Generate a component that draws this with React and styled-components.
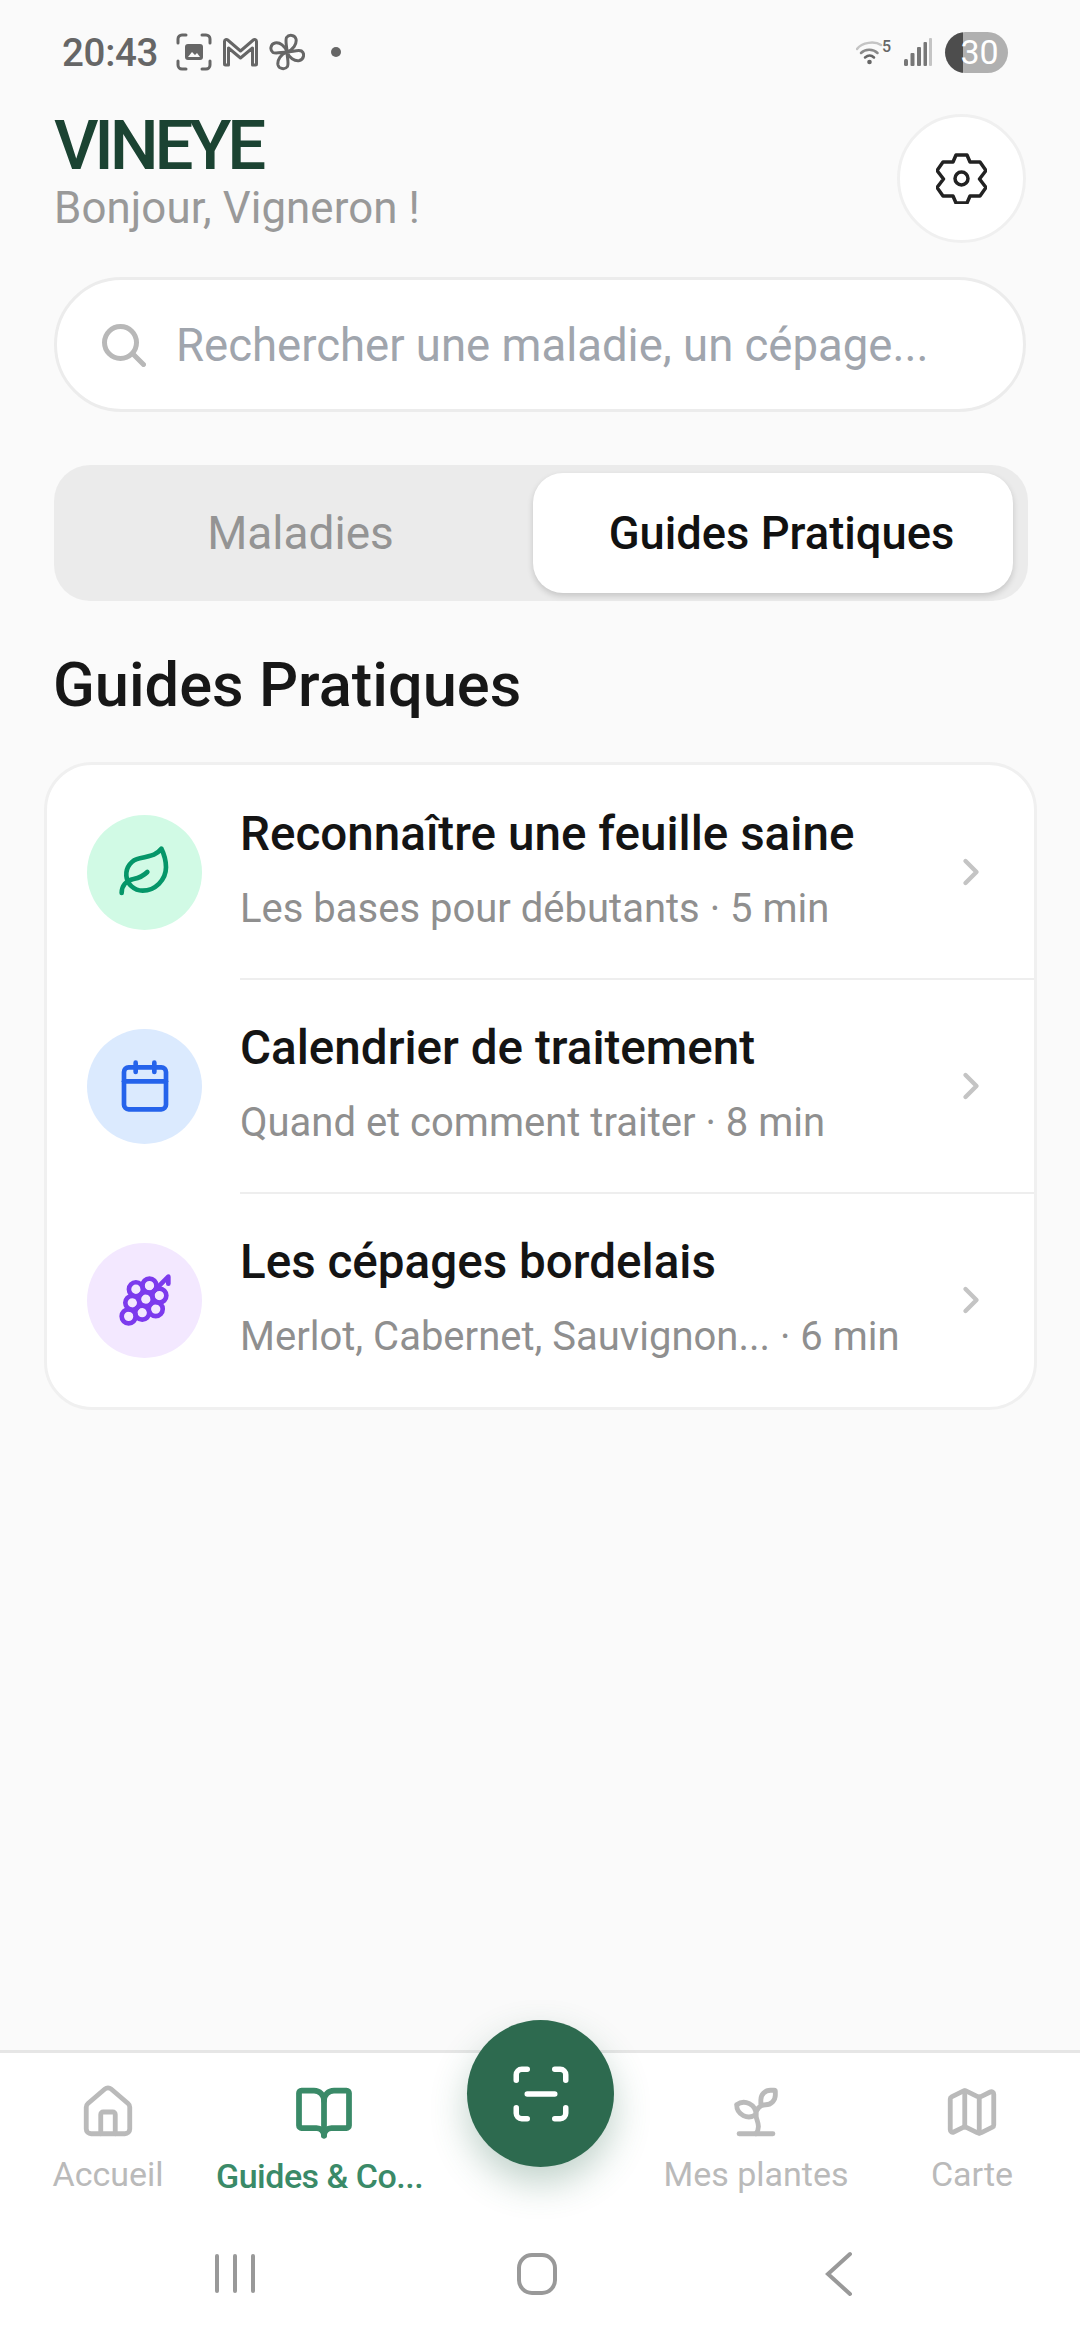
import React from "react";
import styled, { createGlobalStyle } from "styled-components";
import { Leaf, Calendar, Grape, ChevronRight, House, BookOpen, ScanLine, Sprout, Map as MapIcon } from "lucide-react";

const Global = createGlobalStyle`
  html, body { margin: 0; padding: 0; background: #fafafa; }
  * { box-sizing: border-box; }
  body { font-family: Roboto, "Liberation Sans", sans-serif; }
`;

const Page = styled.div`
  width: 1080px; height: 2340px; display: flex; flex-direction: column;
  background: #fafafa; overflow: hidden; position: relative;
`;
const StatusBar = styled.div`
  height: 104px; padding: 0 72px 0 62px; display: flex; align-items: center; justify-content: space-between; color: #666;
`;
const StatusLeft = styled.div`display: flex; align-items: center;`;
const Time = styled.span`font-size: 38.5px; font-weight: 500; letter-spacing: -0.3px; width: 114px;`;
const StatusRight = styled.div`display: flex; align-items: center;`;
const Battery = styled.div`
  width: 63px; height: 41px; border-radius: 21px; margin-left: 13px;
  background: linear-gradient(90deg, #4d4d4d 0 18px, #b0b0b0 18px);
  color: #fff; font-size: 34px; font-weight: 400; display: flex; align-items: center; justify-content: center; padding-left: 6px;
`;
const Main = styled.main`flex: 1; display: flex; flex-direction: column;`;
const Section = styled.section`padding: 0 54px;`;
const Header = styled(Section)`display: flex; justify-content: space-between; align-items: flex-start; padding-top: 10px; padding-bottom: 0;`;
const Brand = styled.div`display: flex; flex-direction: column;`;
const Logo = styled.h1`
  margin: -3px 0 0; font-size: 69px; line-height: 70px; font-weight: 500; color: #1b4332; letter-spacing: -4.2px;
`;
const Greeting = styled.p`margin: 2px 0 0; font-size: 43.8px; line-height: 50px; color: #999; letter-spacing: 0.1px;`;
const GearButton = styled.button`
  width: 129px; height: 129px; border-radius: 50%; background: #fff; border: 3px solid #f0f0f0; display: flex;
  align-items: center; justify-content: center; padding: 0; flex: none;
`;
const SearchBox = styled.div`
  margin-top: 34px; height: 135px; border-radius: 68px; background: #fff; border: 3px solid #ececec;
  display: flex; align-items: center; padding-left: 45px; gap: 30px; color: #a0a5ad;
  font-size: 45.5px; padding-top: 2px;
`;
const Tabs = styled.div`
  margin-top: 53px; height: 136px; width: 974px; border-radius: 36px; background: #ebebeb;
  display: flex; padding: 8px 15px 8px 8px;
`;
const Tab = styled.div`
  flex: ${(p) => (p.$active ? "0 0 480px" : "1")};
  display: flex; align-items: center; justify-content: center; border-radius: 30px;
  font-size: ${(p) => (p.$active ? "45.3px" : "46px")}; font-weight: ${(p) => (p.$active ? 500 : 400)};
  color: ${(p) => (p.$active ? "#111" : "#949494")};
  background: ${(p) => (p.$active ? "#fff" : "transparent")};
  box-shadow: ${(p) => (p.$active ? "0 3px 6px rgba(0,0,0,.16)" : "none")};
  padding-left: ${(p) => (p.$active ? "17px" : "6px")};
`;
const Heading = styled.h2`margin: 44px 0 0 -1px; font-size: 61.4px; line-height: 80px; font-weight: 500; color: #171717;`;
const Card = styled.div`
  margin: 37px 43px 0 44px; background: #fff; border: 3px solid #f0f0f0; border-radius: 48px; overflow: hidden;
`;
const Row = styled.div`
  height: 214px; display: flex; align-items: center; padding-left: 40px;
`;
const Divider = styled.div`height: 2px; margin-left: 193px; background: #eeeeee; margin-top: -1px; margin-bottom: -1px;`;
const IconCircle = styled.div`
  width: 115px; height: 115px; border-radius: 50%; background: ${(p) => p.$bg}; color: ${(p) => p.$fg};
  display: flex; align-items: center; justify-content: center; flex: none;
`;
const RowText = styled.div`margin-left: 38px; flex: 1; display: flex; flex-direction: column; gap: 23px; padding-bottom: 8px;`;
const RowTitle = styled.div`font-size: 47.6px; line-height: 58px; font-weight: 500; color: #141414;`;
const RowSub = styled.div`font-size: 40px; line-height: 46px; color: #8f8f8f;`;
const RowChevron = styled.div`color: #c4c4c4; margin-right: 41px; display: flex;`;
const Nav = styled.nav`
  height: 290px; border-top: 3px solid #e6e6e6; background: #fff; display: flex; flex-direction: column;
`;
const NavTabs = styled.div`display: grid; grid-template-columns: repeat(5, 216px); height: 170px;`;
const NavItem = styled.div`
  display: flex; flex-direction: column; align-items: center; padding-top: 30px; min-width: 0;
  color: ${(p) => (p.$active ? "#3a8a68" : "#bababa")};
`;
const NavLabel = styled.span`
  width: 216px; margin-top: 12px; font-size: 34px; line-height: 42px; text-align: ${(p) => (p.$active ? "left" : "center")}; white-space: nowrap;
  font-weight: ${(p) => (p.$active ? 500 : 400)}; letter-spacing: ${(p) => (p.$active ? "-0.5px" : "0")};
`;
const Fab = styled.button`
  position: absolute; left: 467px; top: 2020px; width: 147px; height: 147px; border-radius: 50%; border: none; padding: 0;
  background: #2d6a4f; color: #fff; display: flex; align-items: center; justify-content: center;
  box-shadow: 0 16px 36px rgba(45, 106, 79, .3);
`;
const SystemNav = styled.div`
  flex: 1; display: grid; grid-template-columns: 1fr 1fr 1fr; align-items: center; justify-items: center; padding: 0 90px 16px 84px;
`;

const ScreenshotIcon = () => (
  <svg width="36" height="38" viewBox="0 0 36 38" fill="none" stroke="#666" strokeWidth="3" strokeLinecap="round">
    <path d="M2 10V6a4 4 0 0 1 4-4h4M26 2h4a4 4 0 0 1 4 4v4M34 28v4a4 4 0 0 1-4 4h-4M10 36H6a4 4 0 0 1-4-4v-4" />
    <rect x="9" y="11" width="18" height="16" rx="3" fill="#666" stroke="none" />
    <path d="M12 24l4-5 3 3 2-2 3 4z" fill="#fafafa" stroke="none" />
  </svg>
);
const GmailIcon = () => (
  <svg width="37" height="30" viewBox="0 0 36 30" fill="none" stroke="#666" strokeWidth="3" strokeLinejoin="round" style={{ marginLeft: 10 }}>
    <path d="M2 27V4.5C2 2.8 4 2 5.2 3L18 14 30.8 3C32 2 34 2.8 34 4.5V27a1 1 0 0 1-1 1h-3V11L18 21 6 11v17H3a1 1 0 0 1-1-1Z" />
  </svg>
);
const FanIcon = () => (
  <svg width="36" height="38" viewBox="0 0 36 38" fill="none" stroke="#666" strokeWidth="3" strokeLinejoin="round" style={{ marginLeft: 10 }}>
    <path d="M18 19C13 19 7 21 4 19.500 .5 17 1.500 11 6 10c5-1 10 3 12 9ZM18 19c0-5-2-11-.5-14.500C20 1 26 2 27 6c1 5-3 11-9 13ZM18 19c5 0 11-2.500 14.500-1 3.500 2.500 2.500 8-2 9.500-5 1-10.500-3-12.500-8.500ZM18 19c0 5 2 11 .5 14.500C16 37 10 36 9 32c-1-5 3-11 9-13Z" />
  </svg>
);
const Dot = styled.span`width: 10px; height: 10px; border-radius: 50%; background: #666; margin-left: 26px;`;

const WifiIcon = () => (
  <svg width="36" height="28" viewBox="0 0 36 28" fill="none">
    <path d="M1 11C6 4 19 3 25 7" stroke="#c4c4c4" strokeWidth="2.500" strokeLinecap="round" />
    <path d="M5 15c4-4 12-4.500 16.500 0" stroke="#8a8a8a" strokeWidth="2.500" strokeLinecap="round" />
    <path d="M9 19.500c3-2.500 6.500-2.500 9 0" stroke="#666" strokeWidth="2.500" strokeLinecap="round" />
    <circle cx="13.500" cy="24" r="2.300" fill="#666" />
    <text x="26" y="14" fontSize="16" fontWeight="500" fill="#666" fontFamily="Roboto">5</text>
  </svg>
);
const SignalIcon = () => (
  <svg width="28" height="30" viewBox="0 0 28 30" style={{ marginLeft: 12 }}>
    <rect x="0" y="22" width="4" height="7" rx="1.500" fill="#777" />
    <rect x="6.500" y="16" width="4" height="13" rx="1" fill="#777" />
    <rect x="13" y="10" width="4" height="19" rx="1" fill="#777" />
    <rect x="19.500" y="5" width="3.500" height="24" rx="1" fill="#777" />
    <rect x="25" y="1" width="3" height="28" rx="1" fill="#c4c4c4" />
  </svg>
);
const GearIcon = () => (
  <svg width="51" height="51" viewBox="0 0 51 51" fill="none" stroke="#222" strokeWidth="3.500" strokeLinejoin="round">
    <path d="M20 2h11l3 7h10l6 8.500-6.500 8.500 6.500 8.500-6 8.500H34l-3 7H20l-3-7H7l-6-8.500L7.500 26 1 17.500 7 9h10z" />
    <circle cx="25.500" cy="25.500" r="6.500" />
  </svg>
);
const SearchIcon = () => (
  <svg width="44" height="43" viewBox="0 0 44 43" fill="none" stroke="#b8b8b8" strokeWidth="5" strokeLinecap="round">
    <circle cx="18.500" cy="18.500" r="16" />
    <path d="M31 30l10.500 10.500" />
  </svg>
);

const HomeSquare = styled.div`width: 40px; height: 42px; border: 4px solid #999; border-radius: 15px;`;
const RecentBars = styled.div`display: flex; gap: 14px;`;
const RecentBar = styled.span`width: 4px; height: 39px; background: #999; border-radius: 2px;`;

const guides = [
  { Icon: Leaf, bg: "#d1fae5", fg: "#059669", title: "Reconnaître une feuille saine", sub: "Les bases pour débutants · 5 min" },
  { Icon: Calendar, bg: "#dbeafe", fg: "#2563eb", title: "Calendrier de traitement", sub: "Quand et comment traiter · 8 min" },
  { Icon: Grape, bg: "#f3e8ff", fg: "#7c3aed", title: "Les cépages bordelais", sub: "Merlot, Cabernet, Sauvignon... · 6 min" },
];

export default function App() {
  return (
    <Page>
      <Global />
      <StatusBar>
        <StatusLeft>
          <Time>20:43</Time>
          <ScreenshotIcon />
          <GmailIcon />
          <FanIcon />
          <Dot />
        </StatusLeft>
        <StatusRight>
          <WifiIcon />
          <SignalIcon />
          <Battery>30</Battery>
        </StatusRight>
      </StatusBar>
      <Main>
        <Header>
          <Brand>
            <Logo>VINEYE</Logo>
            <Greeting>Bonjour, Vigneron !</Greeting>
          </Brand>
          <GearButton><GearIcon /></GearButton>
        </Header>
        <Section>
          <SearchBox><SearchIcon />Rechercher une maladie, un cépage...</SearchBox>
          <Tabs>
            <Tab>Maladies</Tab>
            <Tab $active>Guides Pratiques</Tab>
          </Tabs>
          <Heading>Guides Pratiques</Heading>
        </Section>
        <Card>
          {guides.map(({ Icon, bg, fg, title, sub }, i) => (
            <React.Fragment key={title}>
              {i > 0 && <Divider />}
              <Row>
                <IconCircle $bg={bg} $fg={fg}><Icon size={56} strokeWidth={2} /></IconCircle>
                <RowText>
                  <RowTitle>{title}</RowTitle>
                  <RowSub>{sub}</RowSub>
                </RowText>
                <RowChevron><ChevronRight size={44} strokeWidth={2.400} /></RowChevron>
              </Row>
            </React.Fragment>
          ))}
        </Card>
      </Main>
      <Nav>
        <NavTabs>
          <NavItem><House size={58} strokeWidth={2} /><NavLabel>Accueil</NavLabel></NavItem>
          <NavItem $active><BookOpen size={60} strokeWidth={2.300} /><NavLabel $active>Guides &amp; Co...</NavLabel></NavItem>
          <div />
          <NavItem><Sprout size={58} strokeWidth={2} /><NavLabel>Mes plantes</NavLabel></NavItem>
          <NavItem><MapIcon size={58} strokeWidth={2} /><NavLabel>Carte</NavLabel></NavItem>
        </NavTabs>
        <SystemNav>
          <RecentBars><RecentBar /><RecentBar /><RecentBar /></RecentBars>
          <HomeSquare />
          <svg width="30" height="46" viewBox="0 0 30 46" fill="none" stroke="#999" strokeWidth="4" strokeLinecap="round"><path d="M26 3 4 23l22 20" /></svg>
        </SystemNav>
      </Nav>
      <Fab><ScanLine size={66} strokeWidth={2} /></Fab>
    </Page>
  );
}
